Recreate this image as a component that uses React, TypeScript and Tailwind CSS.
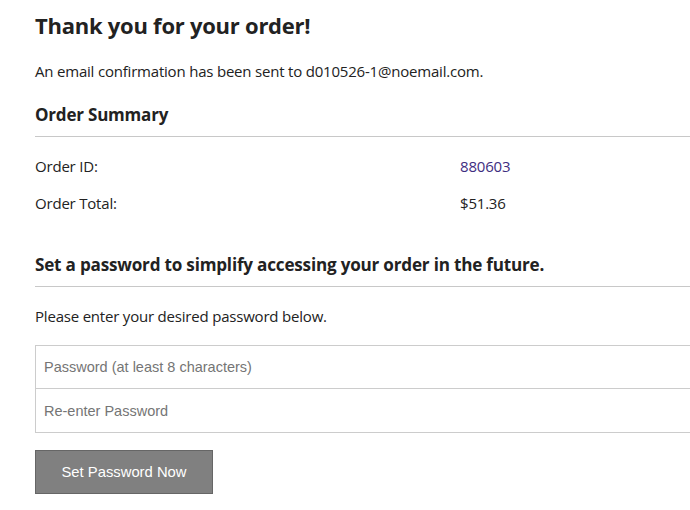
export default function App() {
  const sans = { fontFamily: '"Open Sans", "Noto Sans", sans-serif' };
  const arial = { fontFamily: '"Liberation Sans", Arial, sans-serif' };
  return (
    <div className="w-[690px] h-[510px] overflow-hidden bg-white">
      <div className="w-[720px] pl-[35px] text-[#222]" style={sans}>
        <h1 className="pt-[10px] text-[22px] font-bold leading-[30px] tracking-[-0.25px] text-[#222]">Thank you for your order!</h1>
        <p className="mt-[21px] text-[15px] leading-[20px] tracking-[-0.2px]">An email confirmation has been sent to d010526-1@noemail.com.</p>
        <h2 className="mt-[22px] text-[17px] font-bold leading-[24px] tracking-[-0.2px]">Order Summary</h2>
        <div className="mt-[9px] border-t border-[#c8c8c8]" />
        <div className="mt-[19px] flex text-[15px] leading-[20px] tracking-[-0.2px]">
          <span className="w-[425px]">Order ID:</span>
          <span className="text-[#3e2d7f]">880603</span>
        </div>
        <div className="mt-[17px] flex text-[15px] leading-[20px] tracking-[-0.2px]">
          <span className="w-[425px]">Order Total:</span>
          <span>$51.36</span>
        </div>
        <h2 className="mt-[40px] text-[17.1px] font-bold leading-[24px] tracking-[-0.2px]">Set a password to simplify accessing your order in the future.</h2>
        <div className="mt-[9px] border-t border-[#c8c8c8]" />
        <p className="mt-[19px] text-[15px] leading-[20px] tracking-[-0.2px]">Please enter your desired password below.</p>
        <div className="mt-[19px] border border-[#cccccc] flex flex-col">
          <input
            className="h-[43px] px-[8px] text-[14.5px] text-[#222] placeholder:text-[#757575] outline-none border-b border-[#cccccc]"
            style={arial}
            placeholder="Password (at least 8 characters)"
          />
          <input
            className="h-[43px] px-[8px] text-[14.5px] text-[#222] placeholder:text-[#757575] outline-none"
            style={arial}
            placeholder="Re-enter Password"
          />
        </div>
        <button
          className="mt-[17px] w-[178px] h-[44px] bg-[#808080] border border-[#666666] text-white text-[14.8px]"
          style={arial}
        >
          Set Password Now
        </button>
      </div>
    </div>
  );
}
